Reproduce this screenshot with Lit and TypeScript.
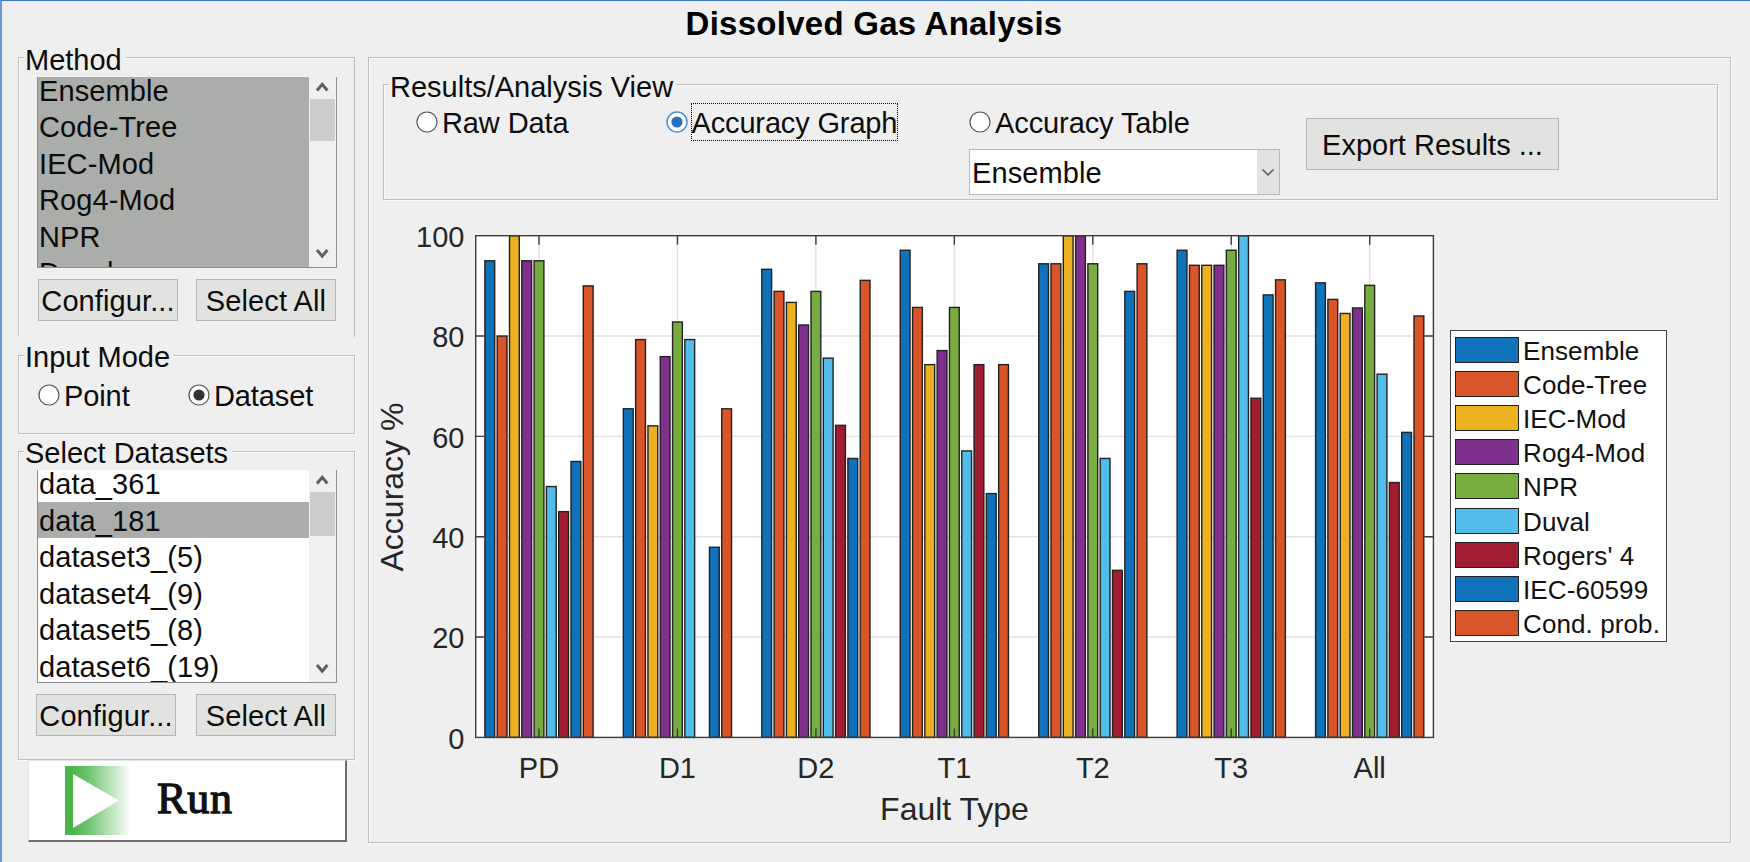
import { html, svg, css, LitElement } from 'lit';
import { customElement, property } from 'lit/decorators.js';
import { classMap } from 'lit/directives/class-map.js';

const SERIES = [
  { name: 'Ensemble', color: '#1072bb' },
  { name: 'Code-Tree', color: '#d95427' },
  { name: 'IEC-Mod', color: '#ecb020' },
  { name: 'Rog4-Mod', color: '#7f2f8c' },
  { name: 'NPR', color: '#77ac41' },
  { name: 'Duval', color: '#52bcea' },
  { name: "Rogers' 4", color: '#a21d31' },
  { name: 'IEC-60599', color: '#1072bb' },
  { name: 'Cond. prob.', color: '#d95427' },
];

const FAULTS = [
  { name: 'PD', values: [95, 80, 100, 95, 95, 50, 45, 55, 90] },
  { name: 'D1', values: [65.5, 79.3, 62.1, 75.9, 82.8, 79.3, 0, 37.9, 65.5] },
  { name: 'D2', values: [93.3, 88.9, 86.7, 82.2, 88.9, 75.6, 62.2, 55.6, 91.1] },
  { name: 'T1', values: [97.1, 85.7, 74.3, 77.1, 85.7, 57.1, 74.3, 48.6, 74.3] },
  { name: 'T2', values: [94.4, 94.4, 100, 100, 94.4, 55.6, 33.3, 88.9, 94.4] },
  { name: 'T3', values: [97.1, 94.1, 94.1, 94.1, 97.1, 100, 67.6, 88.2, 91.2] },
  { name: 'All', values: [90.6, 87.3, 84.5, 85.6, 90.1, 72.4, 50.8, 60.8, 84] },
];

@customElement('dga-list')
class DgaList extends LitElement {
  @property({ type: Array }) items: string[] = [];
  @property({ type: Array }) selected: string[] = [];

  static styles = css`
    :host {
      display: flex;
      box-sizing: border-box;
      width: 300px;
      border: 1px solid #8d8f98;
      border-top: 0;
      background: #fff;
      overflow: hidden;
    }
    .rows {
      flex: 1;
      overflow: hidden;
    }
    .inner {
      margin-top: var(--scroll, 0);
    }
    .row {
      box-sizing: border-box;
      height: 36.5px;
      padding: 2px 0 0 1px;
      line-height: 34.5px;
      white-space: nowrap;
    }
    .row.selected {
      background: #abadab;
    }
    .bar {
      display: flex;
      flex-direction: column;
      justify-content: space-between;
      width: 25px;
      padding: 0 1px;
      background: #f0f0f0;
    }
    .thumb {
      height: var(--thumb, 42px);
      margin-bottom: auto;
      background: #cdcdcd;
    }
    svg {
      display: block;
      width: 25px;
      height: 22px;
      fill: none;
      stroke: #606060;
      stroke-width: 3;
    }
    .down {
      height: 24px;
    }
  `;

  render() {
    return html`
      <div class="rows">
        <div class="inner">
          ${this.items.map(
            (item) => html`<div class=${classMap({ row: true, selected: this.selected.includes(item) })}>${item}</div>`
          )}
        </div>
      </div>
      <div class="bar">
        <svg viewBox="0 0 25 22"><path d="M7 13.5 L12.2 7.4 L17.4 13.5" /></svg>
        <div class="thumb"></div>
        <svg class="down" viewBox="0 0 25 24"><path d="M7 7 L12.2 13.1 L17.4 7" /></svg>
      </div>
    `;
  }
}

@customElement('dga-radio')
class DgaRadio extends LitElement {
  @property() label = '';
  @property({ type: Boolean }) checked = false;
  @property({ type: Boolean }) focused = false;

  static styles = css`
    :host {
      display: flex;
      align-items: center;
      height: 38px;
      letter-spacing: -0.1px;
      white-space: nowrap;
    }
    .dot {
      flex: none;
      width: 22px;
      height: 22px;
      margin-right: 4px;
    }
    .ring {
      fill: #fff;
      stroke: #555;
      stroke-width: 1.2;
    }
    .fill {
      fill: #333;
    }
    .focused .ring {
      stroke: #4a90d9;
      stroke-width: 1.5;
    }
    .focused .fill {
      fill: #2a72be;
    }
    .text {
      box-sizing: border-box;
      height: 38px;
      line-height: 40px;
    }
    .text.outlined {
      border: 1px dotted #000;
      line-height: 38px;
      margin-left: -1px;
      letter-spacing: -0.15px;
    }
  `;

  render() {
    return html`
      <svg class=${classMap({ dot: true, focused: this.focused })} viewBox="0 0 22 22">
        <circle class="ring" cx="11" cy="11" r="10" />
        ${this.checked ? svg`<circle class="fill" cx="11" cy="11" r="5.6" />` : ''}
      </svg>
      <span class=${classMap({ text: true, outlined: this.focused })}>${this.label}</span>
    `;
  }
}

@customElement('dga-chart')
class DgaChart extends LitElement {
  static styles = css`
    :host {
      display: flex;
      align-items: flex-start;
    }
    .plot {
      display: block;
      flex: none;
      width: 1075px;
      height: 641px;
    }
    .area {
      fill: #fff;
    }
    .grid {
      stroke: #e2e2e2;
      stroke-width: 1.4;
    }
    .bar {
      stroke: #222;
      stroke-width: 1.4;
    }
    .axis {
      fill: none;
      stroke: #3c3c3c;
      stroke-width: 1.4;
    }
    text {
      fill: #262626;
      font-size: 29px;
      letter-spacing: 0;
    }
    .end {
      text-anchor: end;
    }
    .mid {
      text-anchor: middle;
    }
    .name {
      font-size: 32px;
    }
    .legend {
      box-sizing: border-box;
      width: 217px;
      height: 312px;
      margin: 129px 0 0 6px;
      padding: 2px 0 0 4px;
      border: 1px solid #444;
      background: #fff;
      font-size: 26px;
      letter-spacing: 0.1px;
      color: #111;
    }
    .entry {
      display: flex;
      align-items: center;
      height: 34.1px;
      gap: 4px;
      white-space: nowrap;
    }
    .swatch {
      box-sizing: border-box;
      width: 64px;
      height: 26px;
      border: 1px solid #222;
    }
    .label {
      line-height: 30px;
      padding-top: 2px;
    }
  `;

  // plot rectangle inside the svg, in pixels
  left = 106.7;
  right = 1064.4;
  top = 34.7;
  bottom = 536.4;

  x(i: number) {
    return 170 + i * 138.45;
  }

  y(value: number) {
    return this.bottom - ((this.bottom - this.top) * value) / 100;
  }

  renderGroup(values: number[], i: number) {
    return values.map((value, j) => {
      if (!value) return '';
      const x = this.x(i) + (j - 4) * 12.3 - 4.9;
      return svg`<rect class="bar" x=${x} y=${this.y(value)} width="9.8"
        height=${this.bottom - this.y(value)} fill=${SERIES[j].color} />`;
    });
  }

  render() {
    const { left, right, top, bottom } = this;
    const inner = [20, 40, 60, 80];
    return html`
      <svg class="plot" viewBox="0 0 1075 641">
        <rect class="area" x=${left} y=${top} width=${right - left} height=${bottom - top} />
        ${inner.map((v) => svg`<line class="grid" x1=${left} x2=${right} y1=${this.y(v)} y2=${this.y(v)} />`)}
        ${FAULTS.map((_, i) => svg`<line class="grid" x1=${this.x(i)} x2=${this.x(i)} y1=${top} y2=${bottom} />`)}
        ${FAULTS.map((fault, i) => this.renderGroup(fault.values, i))}
        <rect class="axis" x=${left} y=${top} width=${right - left} height=${bottom - top} />
        ${inner.map(
          (v) => svg`<path class="axis" d="M${left} ${this.y(v)} h9 M${right} ${this.y(v)} h-9" />`
        )}
        ${FAULTS.map(
          (fault, i) => svg`
            <path class="axis" d="M${this.x(i)} ${top} v9 M${this.x(i)} ${bottom} v-9" />
            <text class="mid" x=${this.x(i)} y="577.3">${fault.name}</text>`
        )}
        ${[0, ...inner, 100].map((v) => svg`<text class="end" x="95.5" y=${this.y(v) + 11.3}>${v}</text>`)}
        <text class="mid name" x="585.5" y="618.5">Fault Type</text>
        <text class="mid name" transform="translate(33.7 286) rotate(-90)">Accuracy %</text>
      </svg>
      <div class="legend">
        ${SERIES.map(
          (s) => html`
            <div class="entry">
              <span class="swatch" style="background:${s.color}"></span>
              <span class="label">${s.name}</span>
            </div>
          `
        )}
      </div>
    `;
  }
}

@customElement('app-root')
class AppRoot extends LitElement {
  static styles = css`
    :host {
      display: block;
      box-sizing: border-box;
      width: 1750px;
      height: 862px;
      overflow: hidden;
      border-top: 1px solid #3f79c6;
      border-left: 2px solid #6b98d6;
      background: #efefef;
      font-family: 'Liberation Sans', Arial, sans-serif;
      font-size: 29px;
      letter-spacing: 0.1px;
      color: #0c0c0c;
    }
    .heading {
      height: 56px;
      margin: 0;
      padding-right: 4px;
      font-size: 33px;
      font-weight: bold;
      letter-spacing: 0.26px;
      line-height: 45px;
      text-align: center;
      color: #000;
    }
    .main {
      display: flex;
      gap: 13px;
      padding-left: 16px;
    }
    .side {
      width: 337px;
    }
    .panel {
      box-sizing: border-box;
      border: 1px solid #bfbfbf;
      box-shadow: 1px 1px 0 #fafafa, inset 1px 1px 0 #fafafa;
    }
    .title {
      display: block;
      width: max-content;
      height: 32px;
      margin: -14px 0 0 5px;
      padding: 0 4px 0 1px;
      line-height: 32px;
      letter-spacing: 0;
      background: #efefef;
    }
    .method {
      height: 280px;
      border-bottom: 0;
      box-shadow: inset 1px 1px 0 #fafafa;
    }
    .method dga-list {
      height: 191px;
      margin: 1px 0 0 18px;
      --scroll: -5.3px;
      --thumb: 42px;
    }
    .input {
      height: 79px;
      margin-top: 18px;
    }
    .input .title,
    .datasets .title {
      line-height: 30px;
    }
    .modes {
      display: grid;
      grid-template-columns: 150px 1fr;
      margin: 2px 0 0 19px;
    }
    .datasets {
      height: 309px;
      margin-top: 17px;
    }
    .datasets dga-list {
      height: 213px;
      margin-left: 18px;
      --scroll: -4.7px;
      --thumb: 44px;
    }
    .buttons {
      display: flex;
      justify-content: space-between;
      width: 298px;
      margin: 11px 0 0 19px;
    }
    .datasets .buttons {
      width: 300px;
      margin-left: 17px;
    }
    .button {
      box-sizing: border-box;
      width: 140px;
      height: 42px;
      padding: 2px 0 0;
      border: 1px solid #b5b5b5;
      border-radius: 0;
      background: #e2e2e0;
      font: inherit;
      letter-spacing: inherit;
      line-height: 38px;
      text-align: center;
      white-space: nowrap;
      color: inherit;
    }
    .run {
      display: flex;
      align-items: center;
      box-sizing: border-box;
      width: 319px;
      height: 82px;
      margin-left: 10px;
      padding: 0 0 0 36px;
      border: 1px solid #e3e3e3;
      border-right: 2px solid #6e6e6e;
      border-bottom: 2px solid #6e6e6e;
      background: #fff;
      font-family: 'Liberation Serif', 'Times New Roman', serif;
      font-size: 44px;
      letter-spacing: 0.8px;
      color: #111;
      -webkit-text-stroke: 1.3px #111;
    }
    .run-label {
      padding-bottom: 4px;
    }
    .play {
      width: 66px;
      height: 69px;
      margin: -1px 26px 0 0;
    }
    .results {
      width: 1363px;
      height: 786px;
    }
    .view {
      width: 1335px;
      height: 116px;
      margin: 26px 0 1px 14px;
    }
    .controls {
      display: flex;
      align-items: flex-start;
      padding-left: 32px;
    }
    .controls dga-radio {
      width: 249.5px;
    }
    .controls .third {
      width: auto;
    }
    .table {
      width: 340px;
      margin-left: 54px;
    }
    .select {
      display: flex;
      box-sizing: border-box;
      width: 311px;
      height: 46px;
      margin-top: 8px;
      border: 1px solid #b9bac0;
      background: #fff;
      line-height: 46px;
    }
    .value {
      flex: 1;
      padding-left: 2px;
    }
    .arrow {
      width: 22px;
      background: #e2e2e0;
      fill: none;
      stroke: #555;
      stroke-width: 1.5;
    }
    .export {
      width: 253px;
      height: 52px;
      margin: 15px 0 0 -3px;
      line-height: 46px;
      letter-spacing: 0;
    }
  `;

  render() {
    return html`
      <h1 class="heading">Dissolved Gas Analysis</h1>
      <div class="main">
        <div class="side">
          <section class="panel method">
            <span class="title">Method</span>
            <dga-list
              .items=${SERIES.slice(0, 6).map((s) => s.name)}
              .selected=${SERIES.map((s) => s.name)}
            ></dga-list>
            <div class="buttons">
              <button class="button">Configur...</button>
              <button class="button">Select All</button>
            </div>
          </section>
          <section class="panel input">
            <span class="title">Input Mode</span>
            <div class="modes">
              <dga-radio label="Point"></dga-radio>
              <dga-radio label="Dataset" checked></dga-radio>
            </div>
          </section>
          <section class="panel datasets">
            <span class="title">Select Datasets</span>
            <dga-list
              .items=${['data_361', 'data_181', 'dataset3_(5)', 'dataset4_(9)', 'dataset5_(8)', 'dataset6_(19)']}
              .selected=${['data_181']}
            ></dga-list>
            <div class="buttons">
              <button class="button">Configur...</button>
              <button class="button">Select All</button>
            </div>
          </section>
          <button class="run">
            <svg class="play" viewBox="0 0 66 69">
              <defs>
                <linearGradient id="fade">
                  <stop offset="0.1" stop-color="#4ab548" />
                  <stop offset="0.35" stop-color="#6fc36d" />
                  <stop offset="1" stop-color="#fff" />
                </linearGradient>
              </defs>
              <rect width="66" height="69" fill="url(#fade)" />
              <path d="M8 8 L54 34.5 L8 62 Z" fill="#fff" />
            </svg>
            <span class="run-label">Run</span>
          </button>
        </div>
        <section class="panel results">
          <div class="panel view">
            <span class="title">Results/Analysis View</span>
            <div class="controls">
              <dga-radio label="Raw Data"></dga-radio>
              <dga-radio label="Accuracy Graph" checked focused></dga-radio>
              <div class="table">
                <dga-radio class="third" label="Accuracy Table"></dga-radio>
                <div class="select">
                  <span class="value">Ensemble</span>
                  <svg class="arrow" viewBox="0 0 22 44"><path d="M5.5 19.5 L11 25 L16.5 19.5" /></svg>
                </div>
              </div>
              <button class="button export">Export Results ...</button>
            </div>
          </div>
          <dga-chart></dga-chart>
        </section>
      </div>
    `;
  }
}
